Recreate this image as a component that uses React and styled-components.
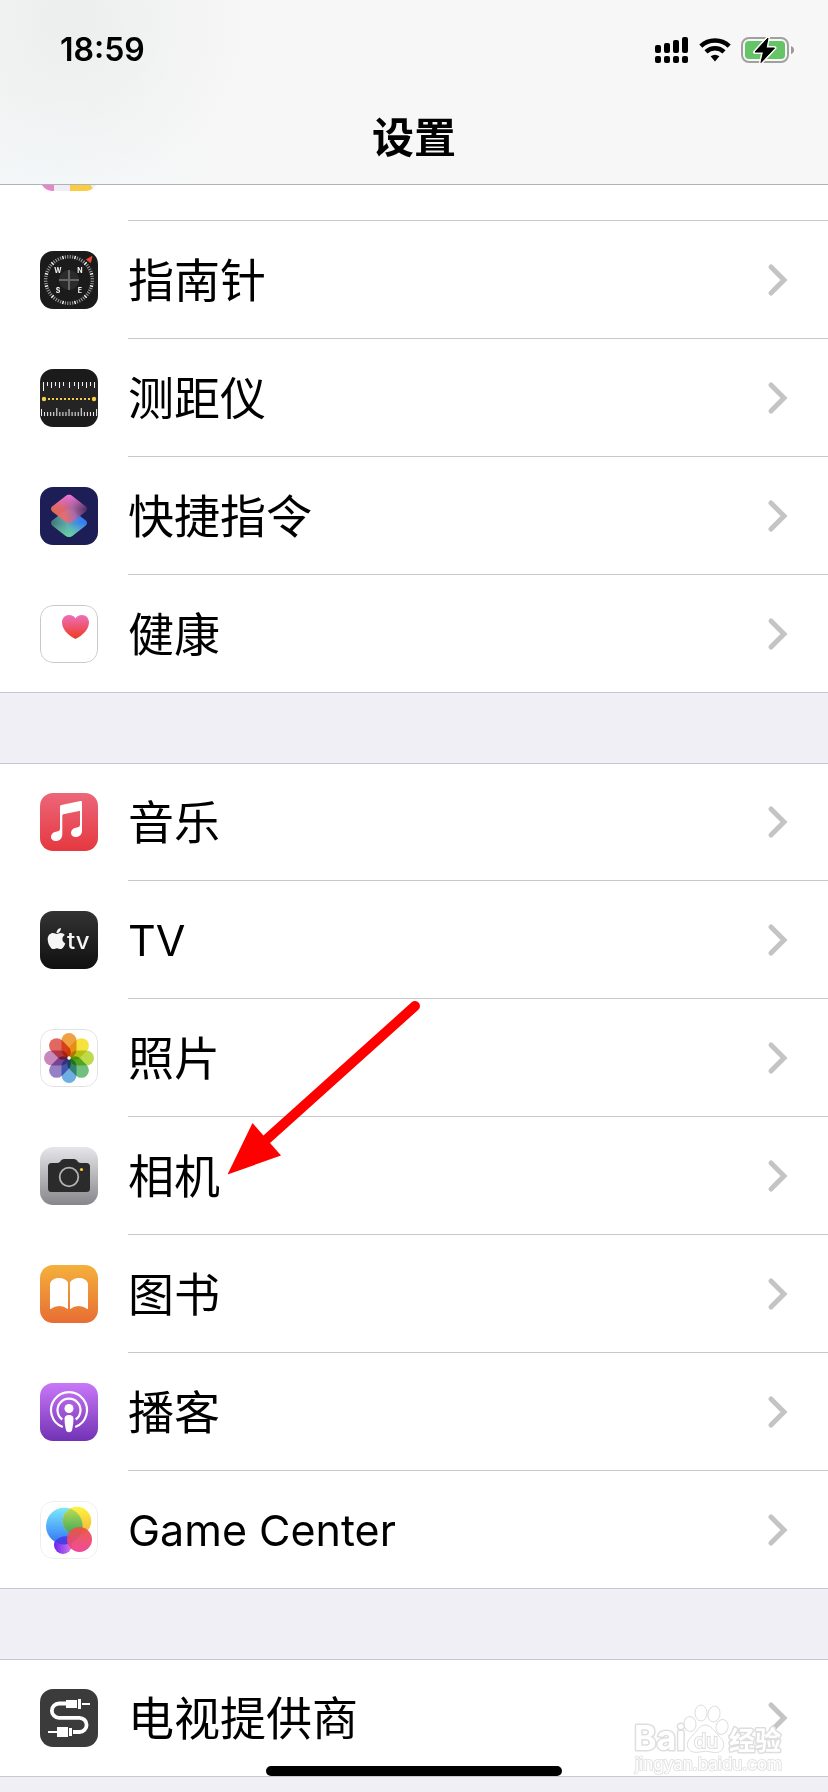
import React from "react";
import styled, { createGlobalStyle } from "styled-components";
import { FaApple } from "react-icons/fa";

const GlobalStyle = createGlobalStyle`
  *, *::before, *::after { box-sizing: border-box; }
  body {
    margin: 0;
    background: #f0eff5;
    color: #000;
    font-family: Inter, "Noto Sans CJK SC", sans-serif;
  }
`;

const Page = styled.div`
  position: relative;
  min-height: 100vh;
  overflow: hidden;
  background: #f0eff5;
`;

const Header = styled.header`
  border-bottom: 1px solid #b2b2b4;
  background:
    radial-gradient(circle at 70px 20px, #eceeed 0, rgba(236, 238, 237, 0) 190px),
    radial-gradient(circle at 40px 180px, #f4f8fa 0, rgba(244, 248, 250, 0) 180px),
    #f7f7f7;
`;

const StatusBar = styled.div`
  display: flex;
  align-items: center;
  justify-content: space-between;
  height: 100px;
  padding: 0 33px 0 60px;
`;

const Clock = styled.time`
  font-size: 32px;
  font-weight: 600;
  line-height: 40px;
`;

const StatusIcons = styled.div`
  display: flex;
  align-items: center;
  gap: 10px;

  svg { display: block; }
`;

const Title = styled.h1`
  margin: 0;
  padding: 8px 0 16px;
  font-size: 42px;
  font-weight: 700;
  line-height: 60px;
  text-align: center;
`;

const Group = styled.ul`
  margin: 0 0 70px;
  padding: 0;
  list-style: none;
  background: #fff;
  border-top: ${(p) => (p.$continued ? "0" : "1px solid #c8c8ca")};
  border-bottom: 1px solid #c8c8ca;

  &:last-of-type { margin-bottom: 0; }
`;

const Item = styled.li`
  position: relative;
  ${(p) => p.$cut && "display: flex; align-items: flex-end; height: 36px; overflow: hidden;"}
`;

const RowLink = styled.a`
  display: flex;
  flex: 1;
  align-items: center;
  gap: 30px;
  padding: 30px 0 0 40px;
  color: inherit;
  text-decoration: none;

  ${Item}:first-child > & { padding-top: 29px; }
`;

const AppIcon = styled.svg`
  display: block;
  flex: none;
  width: 58px;
  height: 58px;
  margin-bottom: 29px;
  border-radius: 13px;
  align-self: flex-start;
`;

const RowBody = styled.span`
  display: flex;
  flex: 1;
  align-items: center;
  justify-content: space-between;
  height: 88px;
  padding: 0 40px 30px 0;
  border-bottom: 1px solid #c8c8ca;

  ${Item}:last-child & { border-bottom: 0; height: 87px; padding-bottom: 29px; }
`;

const Label = styled.span`
  font-size: ${(p) => (p.$latin ? "43px" : "46px")};
  line-height: 58px;
  white-space: nowrap;
`;

const Chevron = styled.svg`
  flex: none;
  width: 22px;
  height: 34px;
`;

const Arrow = styled.svg`
  position: absolute;
  left: 225px;
  top: -117px;
  width: 200px;
  height: 180px;
  z-index: 2;
  pointer-events: none;
`;

const HomeIndicator = styled.div`
  position: absolute;
  bottom: 16px;
  left: 50%;
  width: 296px;
  height: 10px;
  margin-left: -148px;
  border-radius: 5px;
  background: #000;
`;

const Watermark = styled.svg`
  position: absolute;
  right: 40px;
  bottom: 12px;
  width: 156px;
  height: 82px;
  pointer-events: none;
`;

function Gradient({ id, from, to }) {
  return (
    <linearGradient id={id} x1="0" y1="0" x2="0" y2="1">
      <stop offset="0" stopColor={from} />
      <stop offset="1" stopColor={to} />
    </linearGradient>
  );
}

const Outline = ({ color }) => (
  <rect x=".5" y=".5" width="57" height="57" rx="12.5" fill="#fff" stroke={color} />
);

function HiddenAppIcon() {
  return (
    <AppIcon viewBox="0 0 58 58">
      <rect width="58" height="58" fill="#eeeef4" />
      <rect width="14" height="58" fill="#e388c8" />
      <path d="M30 40H44L54 58H30Z" fill="#f8cc43" />
    </AppIcon>
  );
}

function CompassIcon() {
  const ticks = Array.from({ length: 60 }, (_, i) => i);
  return (
    <AppIcon viewBox="0 0 58 58">
      <rect width="58" height="58" fill="#1b1b1b" />
      {ticks.map((i) => (
        <path
          key={i}
          d="M29 4V7.4"
          stroke={i % 5 === 2 ? "#fff" : "#a4a4a4"}
          strokeWidth={i % 5 === 2 ? 1.4 : 1}
          transform={`rotate(${i * 6 + 3} 29 29)`}
        />
      ))}
      <path d="M52 5.5L46.5 8.5L50.5 11.5Z" fill="#f0493b" stroke="#f0493b" />
      <circle cx="29" cy="29" r="10" fill="#2b2b2b" />
      <path d="M29 19V39M19 29H39" stroke="#666" strokeWidth="2" />
      <g fill="#f4f4f4" fontSize="7" fontWeight="700" textAnchor="middle">
        <text x="18" y="21.5">W</text>
        <text x="40" y="21.5">N</text>
        <text x="18" y="42">S</text>
        <text x="40" y="42">E</text>
      </g>
    </AppIcon>
  );
}

function MeasureIcon() {
  const top = [[3.5, 9], [7.5, 4], [11.5, 6], [15.5, 4], [19.5, 6], [23.5, 4], [29.5, 6], [34.5, 4], [38.5, 7], [42.5, 4], [46.5, 6], [50.5, 4], [54.5, 6]];
  const bottom = Array.from({ length: 19 }, (_, i) => [1.5 + i * 3.06, { 0: 7, 5: 8, 9: 7, 13: 8, 18: 7 }[i] || 4]);
  return (
    <AppIcon viewBox="0 0 58 58">
      <rect width="58" height="58" fill="#1b1b1b" />
      <rect y="13" width="58" height="34" fill="#242424" />
      {top.map(([x, h]) => <path key={x} d={`M${x} 13v${h}`} stroke="#f2f2f2" />)}
      {bottom.map(([x, h]) => <path key={x} d={`M${x} 47v${-h}`} stroke="#f2f2f2" />)}
      <path d="M8 30H50" stroke="#f7cf46" strokeWidth="2" strokeDasharray="2 2" />
      <circle cx="4" cy="30" r="2.2" fill="#f7cf46" />
      <circle cx="54" cy="30" r="2.2" fill="#f7cf46" />
    </AppIcon>
  );
}

const lowerTile = "M25.5 23.2Q29 20.5 32.5 23.2L45.5 33.3Q48.6 36 45.5 38.7L32.5 48.8Q29 51.3 25.5 48.8L12.5 38.7Q9.4 36 12.5 33.3Z";
const upperTile = "M25.5 9.2Q29 6.5 32.5 9.2L45.5 19.3Q48.6 22 45.5 24.7L32.5 34.8Q29 37.3 25.5 34.8L12.5 24.7Q9.4 22 12.5 19.3Z";

function ShortcutsIcon() {
  return (
    <AppIcon viewBox="0 0 58 58">
      <defs>
        <linearGradient id="sc-low" x1="0" y1=".6" x2="1" y2=".4">
          <stop offset="0" stopColor="#42706f" />
          <stop offset=".45" stopColor="#5aa9b4" />
          <stop offset=".8" stopColor="#3b82f0" />
          <stop offset="1" stopColor="#3479ee" />
        </linearGradient>
        <linearGradient id="sc-green" x1="0" y1="0" x2="0" y2="1">
          <stop offset=".5" stopColor="#6fe0a5" stopOpacity="0" />
          <stop offset="1" stopColor="#6fe0a0" />
        </linearGradient>
        <linearGradient id="sc-top" x1="0" y1=".6" x2="1" y2=".4">
          <stop offset="0" stopColor="#f26c50" />
          <stop offset=".35" stopColor="#e96b72" />
          <stop offset=".6" stopColor="#b06aa6" />
          <stop offset="1" stopColor="#472a60" />
        </linearGradient>
        <linearGradient id="sc-pink" x1="0" y1="0" x2="0" y2="1">
          <stop offset="0" stopColor="#f070e0" />
          <stop offset=".5" stopColor="#dd6ab0" stopOpacity="0" />
        </linearGradient>
      </defs>
      <rect width="58" height="58" fill="#1c1e55" />
      <path d={lowerTile} fill="url(#sc-low)" />
      <path d={lowerTile} fill="url(#sc-green)" opacity=".8" />
      <path d={upperTile} fill="url(#sc-top)" opacity=".94" />
      <path d={upperTile} fill="url(#sc-pink)" />
    </AppIcon>
  );
}

function HealthIcon() {
  return (
    <AppIcon viewBox="0 0 58 58">
      <defs><Gradient id="heart" from="#ee6fbb" to="#ee3a20" /></defs>
      <Outline color="#c9c9c9" />
      <path d="M35.5 34C33 33 22 26.500 22 17.500C22 13 25 10 29 10C32 10 34.500 11.500 35.500 13.500C36.500 11.500 39 10 42 10C46 10 49 13 49 17.500C49 26.500 38 33 35.500 34Z" fill="url(#heart)" />
    </AppIcon>
  );
}

function MusicIcon() {
  return (
    <AppIcon viewBox="0 0 58 58">
      <defs><Gradient id="music" from="#ec6679" to="#e5383f" /></defs>
      <rect width="58" height="58" fill="url(#music)" />
      <path fill="#fff" d="M20 13.6Q20 12.300 21.300 12L40.500 8Q42 7.800 42 9.300V37.500C42 41.800 39.300 44 35.800 44C32.700 44 31 42.200 31 39.700C31 37 33 35.200 36 34.700C38.800 34.300 40 33.900 40 31.500V18.600Q40 17.700 39 17.900L23.200 21.200Q22.300 21.400 22.300 22.400V41C22.300 45.500 19.500 48 15.800 48C12.700 48 11 46.200 11 43.700C11 41 13 39.200 16 38.700C18.800 38.200 20 37.900 20 35.500Z" />
    </AppIcon>
  );
}

function TvIcon() {
  return (
    <AppIcon viewBox="0 0 58 58">
      <defs><Gradient id="tv" from="#333" to="#101010" /></defs>
      <rect width="58" height="58" fill="url(#tv)" />
      <FaApple x="4.500" y="15.500" size={24} color="#f6f6f6" />
      <text x="27" y="38" fill="#f6f6f6" fontSize="24" fontWeight="500">tv</text>
    </AppIcon>
  );
}

function PhotosIcon() {
  const petals = ["#f0a040", "#f6e23f", "#bddb49", "#70bf7f", "#6faee3", "#9580c6", "#c888bd", "#e26760"];
  return (
    <AppIcon viewBox="0 0 58 58">
      <Outline color="#e2e2e2" />
      <g style={{ isolation: "isolate" }}>
        {petals.map((c, i) => (
          <rect key={c} x="21.5" y="4" width="15" height="24.500" rx="7.500" fill={c} style={{ mixBlendMode: "multiply" }} transform={`rotate(${i * 45} 29 29)`} />
        ))}
      </g>
      <circle cx="29" cy="29" r="1.700" fill="#fff" />
    </AppIcon>
  );
}

function CameraIcon() {
  return (
    <AppIcon viewBox="0 0 58 58">
      <defs><Gradient id="camera" from="#e5e5ea" to="#87868b" /></defs>
      <rect width="58" height="58" fill="url(#camera)" />
      <path fill="#2b2b2b" d="M8 19.500Q8 16 11.500 16H17C19.500 16 20 15 21 13.500Q22 12 24 12H34Q36 12 37 13.500C38 15 38.500 16 41 16H46.500Q50 16 50 19.500V41.500Q50 45 46.500 45H11.500Q8 45 8 41.500Z" />
      <circle cx="29" cy="30" r="9.300" fill="none" stroke="#b3b3b8" strokeWidth="1.800" />
      <circle cx="41.500" cy="22.500" r="1.600" fill="#f7cf46" />
    </AppIcon>
  );
}

function BooksIcon() {
  return (
    <AppIcon viewBox="0 0 58 58">
      <defs><Gradient id="books" from="#f4b03d" to="#e86d33" /></defs>
      <rect width="58" height="58" fill="url(#books)" />
      <path fill="#fff" d="M10 18.500Q12 13 19 13Q25.500 13 28 17.500V43.500Q28 44.300 27.200 43.800Q24 41 19.500 41Q14.500 41 11 43.800Q10 44.500 10 43.500ZM48 18.500Q46 13 39 13Q32.500 13 30 17.500V43.500Q30 44.300 30.800 43.800Q34 41 38.500 41Q43.500 41 47 43.800Q48 44.500 48 43.500Z" />
    </AppIcon>
  );
}

function PodcastsIcon() {
  return (
    <AppIcon viewBox="0 0 58 58">
      <defs><Gradient id="podcasts" from="#c878f8" to="#7232b4" /></defs>
      <rect width="58" height="58" fill="url(#podcasts)" />
      <g fill="none" stroke="#fff" strokeWidth="2.200">
        <path d="M22.800 44A18 18 0 1 1 35.200 44" />
        <path d="M22.300 36.500A11.500 11.500 0 1 1 35.700 36.500" />
      </g>
      <circle cx="29" cy="25.500" r="4.500" fill="#fff" />
      <path d="M24.500 35.500Q24.500 32 29 32Q33.500 32 33.500 35.500Q33.500 41 32.200 46.500Q31.700 49.300 29 49.300Q26.300 49.300 25.800 46.500Q24.500 41 24.500 35.500Z" fill="#fff" />
    </AppIcon>
  );
}

function GameCenterIcon() {
  return (
    <AppIcon viewBox="0 0 58 58">
      <defs>
        <Gradient id="gc-blue" from="#7ce8fb" to="#2f74f6" />
        <Gradient id="gc-yellow" from="#fcf53f" to="#f5b03e" />
        <Gradient id="gc-green" from="#c3df55" to="#35a45a" />
        <Gradient id="gc-red" from="#ea5540" to="#ef3f92" />
        <linearGradient id="gc-purple"><stop offset="0" stopColor="#6a22f0" /><stop offset="1" stopColor="#d77bea" /></linearGradient>
        <clipPath id="gc-clip"><circle cx="24.300" cy="25" r="18.300" /></clipPath>
      </defs>
      <Outline color="#eee" />
      <circle cx="23" cy="44" r="9" fill="url(#gc-purple)" />
      <circle cx="24.300" cy="25" r="18.300" fill="url(#gc-blue)" />
      <circle cx="37" cy="20" r="14.300" fill="url(#gc-yellow)" />
      <circle cx="37" cy="20" r="14.300" fill="url(#gc-green)" clipPath="url(#gc-clip)" />
      <path d="M14.500 40.500Q23 46 32 41.500L31 36Q22 33 14.500 40.500Z" fill="#4d2be0" opacity=".75" />
      <circle cx="39.500" cy="38.500" r="12.500" fill="url(#gc-red)" opacity=".94" />
    </AppIcon>
  );
}

function ProviderIcon() {
  return (
    <AppIcon viewBox="0 0 58 58">
      <rect width="58" height="58" fill="#3b3b3b" />
      <path d="M26 14.500H19A7 7 0 0 0 19 28.800H39.500A7 7 0 0 1 39.500 43H33" fill="none" stroke="#fff" strokeWidth="3.800" />
      <path fill="#fff" d="M26 11H37V19H26ZM38 10H41V20H38ZM42 14H50V16H42ZM17 38H28V48H17ZM29 39H32V47H29ZM8 42H17V44H8Z" />
    </AppIcon>
  );
}

const groups = [
  {
    continued: true,
    items: [
      { cut: true, Icon: HiddenAppIcon },
      { name: "指南针", Icon: CompassIcon },
      { name: "测距仪", Icon: MeasureIcon },
      { name: "快捷指令", Icon: ShortcutsIcon },
      { name: "健康", Icon: HealthIcon },
    ],
  },
  {
    items: [
      { name: "音乐", Icon: MusicIcon },
      { name: "TV", Icon: TvIcon, latin: true },
      { name: "照片", Icon: PhotosIcon },
      { name: "相机", Icon: CameraIcon, pointed: true },
      { name: "图书", Icon: BooksIcon },
      { name: "播客", Icon: PodcastsIcon },
      { name: "Game Center", Icon: GameCenterIcon, latin: true },
    ],
  },
  { items: [{ name: "电视提供商", Icon: ProviderIcon }] },
];

function SettingsRow({ name, Icon, latin, cut, pointed }) {
  return (
    <Item $cut={cut}>
      <RowLink href="#" aria-label={name}>
        <Icon />
        <RowBody>
          {name && <Label $latin={latin}>{name}</Label>}
          {name && (
            <Chevron viewBox="0 0 22 34" aria-hidden="true">
              <path d="M5 4L18 17L5 30" fill="none" stroke="#c4c4c6" strokeWidth="5" strokeLinecap="round" />
            </Chevron>
          )}
        </RowBody>
      </RowLink>
      {pointed && (
        <Arrow viewBox="0 0 200 180" aria-hidden="true">
          <path d="M190 6L42 139" stroke="#f00" strokeWidth="10" strokeLinecap="round" />
          <path d="M2.500 174.500L27.500 123L56 155.500Z" fill="#f00" />
        </Arrow>
      )}
    </Item>
  );
}

function SignalIcon() {
  return (
    <svg width="34" height="28" viewBox="0 0 34 28" aria-label="信号">
      <rect x="0" y="9" width="6" height="8" rx="2" />
      <rect x="9" y="7" width="6" height="10" rx="2" />
      <rect x="18" y="4" width="6" height="13" rx="2" />
      <rect x="27" y="1" width="6" height="16" rx="2" />
      {[0, 9, 18, 27].map((x) => <rect key={x} x={x} y="20" width="6" height="7" rx="2" />)}
    </svg>
  );
}

function WifiIcon() {
  return (
    <svg width="32" height="26" viewBox="1 0 32 26" aria-label="无线局域网">
      <g fill="none" stroke="#000" strokeWidth="4.400">
        <path d="M2.800 9.200A20.500 20.500 0 0 1 31.200 9.200" />
        <path d="M8 14.800A13 13 0 0 1 26 14.800" />
      </g>
      <path d="M12.600 19.300Q17 16 21.400 19.300L17 24.500Z" />
    </svg>
  );
}

function BatteryIcon() {
  return (
    <svg width="54" height="28" viewBox="0 0 54 28" aria-label="正在充电">
      <rect x="1" y="2" width="46" height="24" rx="7" fill="none" stroke="#a0a0a0" strokeWidth="2" />
      <path d="M50 10Q53 11 53 14Q53 17 50 18Z" fill="#9a9a9a" />
      <rect x="4" y="5" width="40" height="18" rx="4" fill="#65c466" />
      <path d="M27 2L14 16H22.500L20 26.500L33.500 12H25Z" fill="#000" stroke="#f7f7f7" strokeWidth="4" strokeLinejoin="round" paintOrder="stroke" />
      <path d="M27 2L14 16H22.500L20 26.500L33.500 12H25Z" stroke="#000" strokeLinejoin="round" />
    </svg>
  );
}

function BaiduMark() {
  return (
    <Watermark viewBox="0 0 156 82" aria-hidden="true">
      <g fill="#fff" stroke="#dedede" strokeWidth="3" strokeLinejoin="round" paintOrder="stroke">
        <text x="2" y="52" fontSize="34" fontWeight="700">Bai</text>
        <text x="97" y="52" fontSize="26" fontWeight="700">经验</text>
        <text x="3" y="72" fontSize="17" stroke="#e4e4e4" strokeWidth="2">jingyan.baidu.com</text>
      </g>
      <g fill="#fff" stroke="#dedede">
        <ellipse cx="58" cy="26" rx="6" ry="7.500" transform="rotate(-8 58 26)" />
        <ellipse cx="69" cy="15" rx="6" ry="8" />
        <ellipse cx="82" cy="16" rx="6" ry="8" transform="rotate(12 82 16)" />
        <ellipse cx="90" cy="29" rx="6" ry="7.500" transform="rotate(15 90 29)" />
        <path d="M73 27C79 27 82 33 86 37C91 42 93 45 91 50C89 55 84 55 79 54C75 53 72 53 68 54C63 55 58 54 56 50C54 45 57 41 61 37C65 33 68 27 73 27Z" />
      </g>
      <text x="62" y="50" fontSize="20" fill="#fff" stroke="#dedede" strokeWidth="2" paintOrder="stroke">du</text>
    </Watermark>
  );
}

export default function App() {
  return (
    <Page>
      <GlobalStyle />
      <Header>
        <StatusBar>
          <Clock>18:59</Clock>
          <StatusIcons>
            <SignalIcon />
            <WifiIcon />
            <BatteryIcon />
          </StatusIcons>
        </StatusBar>
        <Title>设置</Title>
      </Header>
      <main>
        {groups.map((group, i) => (
          <Group key={i} $continued={group.continued}>
            {group.items.map((item, j) => <SettingsRow key={j} {...item} />)}
          </Group>
        ))}
      </main>
      <BaiduMark />
      <HomeIndicator />
    </Page>
  );
}
